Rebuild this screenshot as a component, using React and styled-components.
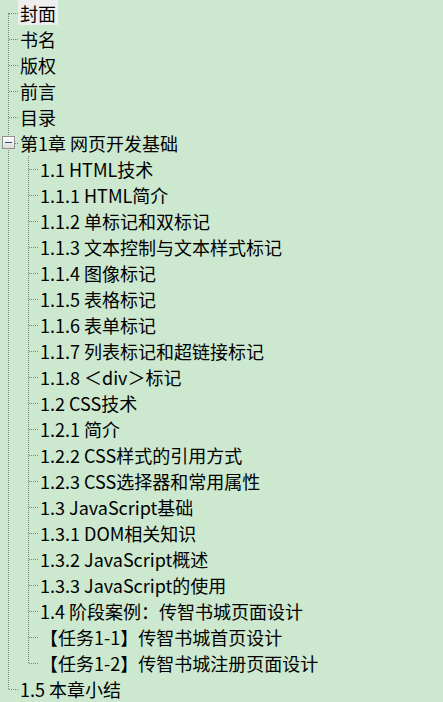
import styled, { createGlobalStyle } from "styled-components";

const GlobalStyle = createGlobalStyle`
  html, body {
    margin: 0;
    padding: 0;
    background: #cce8cf;
  }
  body {
    font-family: "Noto Sans CJK SC", "Noto Sans", sans-serif;
  }
`;

const toc = [
  { title: "封面", selected: true },
  { title: "书名" },
  { title: "版权" },
  { title: "前言" },
  { title: "目录" },
  {
    title: "第1章 网页开发基础",
    children: [
      { title: "1.1 HTML技术" },
      { title: "1.1.1 HTML简介" },
      { title: "1.1.2 单标记和双标记" },
      { title: "1.1.3 文本控制与文本样式标记" },
      { title: "1.1.4 图像标记" },
      { title: "1.1.5 表格标记" },
      { title: "1.1.6 表单标记" },
      { title: "1.1.7 列表标记和超链接标记" },
      { title: "1.1.8 ＜div＞标记" },
      { title: "1.2 CSS技术" },
      { title: "1.2.1 简介" },
      { title: "1.2.2 CSS样式的引用方式" },
      { title: "1.2.3 CSS选择器和常用属性" },
      { title: "1.3 JavaScript基础" },
      { title: "1.3.1 DOM相关知识" },
      { title: "1.3.2 JavaScript概述" },
      { title: "1.3.3 JavaScript的使用" },
      { title: "1.4 阶段案例：传智书城页面设计" },
      { title: "【任务1-1】传智书城首页设计" },
      { title: "【任务1-2】传智书城注册页面设计" },
    ],
  },
  { title: "1.5 本章小结" },
];

function TreeNode({ node, level }) {
  return (
    <Item>
      <Row $level={level}>
        {node.children && (
          <Expander $level={level}>
            <Minus />
          </Expander>
        )}
        <Label $selected={node.selected}>{node.title}</Label>
      </Row>
      {node.children && (
        <Group $level={level + 1}>
          {node.children.map((child) => (
            <TreeNode key={child.title} node={child} level={level + 1} />
          ))}
        </Group>
      )}
    </Item>
  );
}

export default function App() {
  return (
    <>
      <GlobalStyle />
      <Tree>
        {toc.map((node) => (
          <TreeNode key={node.title} node={node} level={0} />
        ))}
      </Tree>
    </>
  );
}

const Tree = styled.ul`
  list-style: none;
  margin: 0;
  padding: 0;
  position: relative;
  width: 443px;
  overflow: hidden;

  &::before {
    content: "";
    position: absolute;
    left: 8px;
    top: 13px;
    bottom: 13px;
    border-left: 1px dotted #7f7f7f;
  }
`;

const Group = styled.ul`
  list-style: none;
  margin: 0;
  padding: 0;
  position: relative;

  &::before {
    content: "";
    position: absolute;
    left: ${(p) => 8 + 20 * p.$level}px;
    top: 0;
    bottom: 13px;
    border-left: 1px dotted #7f7f7f;
  }
`;

const Item = styled.li`
  margin: 0;
  padding: 0;
`;

const Row = styled.div`
  position: relative;
  display: flex;
  align-items: center;
  height: 26px;
  padding-left: ${(p) => 18 + 20 * p.$level}px;

  &::before {
    content: "";
    position: absolute;
    left: ${(p) => 9 + 20 * p.$level}px;
    top: 13px;
    width: 9px;
    border-top: 1px dotted #7f7f7f;
  }
`;

const Label = styled.span`
  display: flex;
  align-items: center;
  height: 25px;
  margin-bottom: 1px;
  padding: 0 2px;
  font-size: 18px;
  color: #000;
  white-space: nowrap;
  background: ${(p) => (p.$selected ? "#eeeeee" : "transparent")};
`;

const Expander = styled.span`
  position: absolute;
  z-index: 1;
  left: ${(p) => 2 + 20 * p.$level}px;
  top: 6px;
  width: 11px;
  height: 11px;
  border: 1px solid #919191;
  background: linear-gradient(#ffffff, #dcdcdc);
  display: flex;
  align-items: center;
  justify-content: center;
`;

const Minus = styled.span`
  width: 7px;
  height: 1px;
  background: #2c4a8c;
`;
